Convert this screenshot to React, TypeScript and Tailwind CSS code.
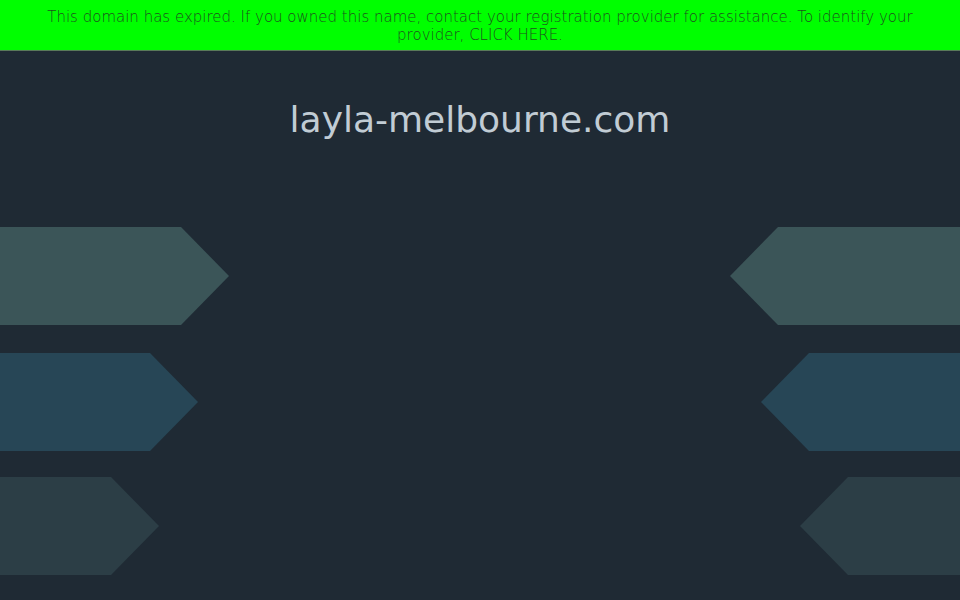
import React from "react";

const rows = [
  { w: 229, color: "bg-[#3b5558]", mt: "mt-0" },
  { w: 198, color: "bg-[#274656]", mt: "mt-[28px]" },
  { w: 159, color: "bg-[#2c3e46]", mt: "mt-[26px]" },
];

export default function App() {
  return (
    <div className="w-[960px] h-[600px] overflow-hidden bg-[#1f2a34] flex flex-col" style={{ fontFamily: '"DejaVu Sans", sans-serif' }}>
      <div className="h-[51px] shrink-0 bg-[#00ff00] border-b border-[#5a7a5a] pt-[8px] text-center text-[15px] leading-[18px] text-[#1f4f1f] px-[40px] font-light">
        This domain has expired. If you owned this name, contact your registration provider for assistance. To identify your provider, CLICK HERE.
      </div>
      <div className="h-[176px] shrink-0 flex justify-center pt-[47px]">
        <h1 className="text-[36px] leading-[44px] text-[#c1ccd4]">layla-melbourne.com</h1>
      </div>
      <div className="flex flex-col">
        {rows.map((r, i) => (
          <div key={i} className={`flex justify-between h-[98px] ${r.mt}`}>
            <div
              className={`h-full ${r.color}`}
              style={{ width: r.w, clipPath: "polygon(0 0, calc(100% - 48px) 0, 100% 50%, calc(100% - 48px) 100%, 0 100%)" }}
            />
            <div
              className={`h-full ${r.color}`}
              style={{ width: r.w + 1, clipPath: "polygon(48px 0, 100% 0, 100% 100%, 48px 100%, 0 50%)" }}
            />
          </div>
        ))}
      </div>
    </div>
  );
}
